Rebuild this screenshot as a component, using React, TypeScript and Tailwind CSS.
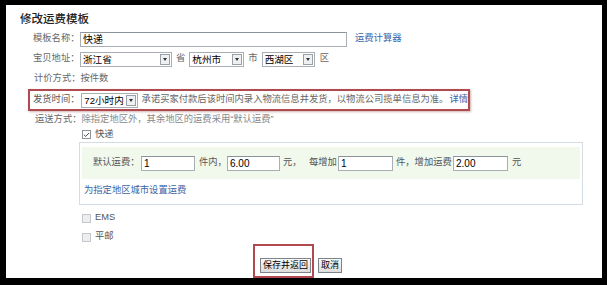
import { Check } from 'lucide-react'

// Small select box with a grey arrow button on the right
function Select({ value, width }: { value: string; width: string }) {
  return (
    <div className={`${width} h-[15px] flex items-stretch border border-[#a9aeb5] bg-white`}>
      <span className="flex-1 pl-[2px] leading-[13px] text-[9.6px] text-black whitespace-nowrap overflow-hidden">{value}</span>
      <span className="w-[10px] shrink-0 my-[1px] mr-[1px] flex items-center justify-center border border-[#9aa0a8] bg-[#eef0f2]">
        <span className="w-0 h-0 border-l-[2.5px] border-r-[2.5px] border-t-[3px] border-l-transparent border-r-transparent border-t-[#333]" />
      </span>
    </div>
  )
}

function Input({ value, width }: { value: string; width: string }) {
  return (
    <div className={`${width} shrink-0 h-[15px] border border-[#a9aeb5] border-t-[#8d939b] bg-white pl-[2px] leading-[13px] text-[10px] text-black`}>
      {value}
    </div>
  )
}

function Box({ checked }: { checked?: boolean }) {
  return (
    <span className={`w-[9px] h-[9px] flex items-center justify-center border ${checked ? 'border-[#8e949b] bg-white' : 'border-[#c4c7cb] bg-[#eceef0]'}`}>
      {checked && <Check size={8} strokeWidth={3} className="text-[#333]" />}
    </span>
  )
}

export default function App() {
  return (
    <div className="w-[612px] h-[285px] bg-white font-['Liberation_Sans','Noto_Sans_CJK_SC',sans-serif]">
      <div className="w-[607px] h-[285px] border-t-[5px] border-l-[6px] border-r-[5px] border-b-[7px] border-black pl-[14px] pt-[5px] text-[9.3px] text-[#666] whitespace-nowrap">
        {/* Title */}
        <div className="h-[19px] leading-[16px] pt-[1px] text-[11.5px] font-medium text-[#222]">修改运费模板</div>

        {/* 模板名称 */}
        <div className="h-[20px] pl-[13px] flex items-center">
          <span className="w-[47px]">模板名称：</span>
          <Input value="快递" width="w-[267px]" />
          <span className="ml-[8px] text-[#3b64a6]">运费计算器</span>
        </div>

        {/* 宝贝地址 */}
        <div className="h-[20px] pl-[13px] flex items-center">
          <span className="w-[47px]">宝贝地址：</span>
          <Select value="浙江省" width="w-[92px]" />
          <span className="mx-[4px]">省</span>
          <Select value="杭州市" width="w-[55px]" />
          <span className="mx-[4px]">市</span>
          <Select value="西湖区" width="w-[53px]" />
          <span className="ml-[5px]">区</span>
        </div>

        {/* 计价方式 */}
        <div className="h-[20px] pl-[14px] flex items-center">
          <span>计价方式：</span>
          <span>按件数</span>
        </div>

        {/* 发货时间 */}
        <div className="ml-[8px] w-[442px] h-[22px] border-2 border-[#b04a50] shadow-[1px_1px_2px_rgba(120,30,30,0.35)] pl-[3px] flex items-center">
          <span className="w-[49px] text-[#555]">发货时间：</span>
          <Select value="72小时内" width="w-[57px]" />
          <span className="ml-[4px]">承诺买家付款后该时间内录入物流信息并发货，以物流公司揽单信息为准。</span>
          <span className="ml-[1px] text-[#3b64a6]">详情</span>
        </div>

        {/* 运送方式 */}
        <div className="h-[15px] mt-[1px] pl-[15px] flex items-center">
          <span>运送方式：</span>
          <span className="text-[#888]">除指定地区外，其余地区的运费采用“默认运费”</span>
        </div>

        <div className="h-[15px] pl-[62px] flex items-center gap-[4px]">
          <Box checked />
          <span className="text-[#555]">快递</span>
        </div>

        {/* Default fee panel */}
        <div className="ml-[59px] w-[504px] h-[63px] border border-[#d5dde3] pt-[4px] px-[2px]">
          <div className="h-[32px] bg-[#f1f8ec] pl-[11px] flex items-center text-[#555]">
            <span className="w-[48px]">默认运费：</span>
            <Input value="1" width="w-[54px]" />
            <span className="ml-[4px] w-[28px]">件内，</span>
            <Input value="6.00" width="w-[53px]" />
            <span className="ml-[3px] w-[26px]">元，</span>
            <span className="w-[29px]">每增加</span>
            <Input value="1" width="w-[55px]" />
            <span className="ml-[3px] w-[57px]">件，增加运费</span>
            <Input value="2.00" width="w-[55px]" />
            <span className="ml-[4px]">元</span>
          </div>
          <div className="h-[24px] pl-[2px] flex items-center text-[#3b64a6]">为指定地区城市设置运费</div>
        </div>

        <div className="h-[12px] mt-[7px] pl-[62px] flex items-center gap-[4px]">
          <Box />
          <span className="text-[#555]">EMS</span>
        </div>
        <div className="h-[12px] mt-[7px] pl-[62px] flex items-center gap-[4px]">
          <Box />
          <span className="text-[#555]">平邮</span>
        </div>

        {/* Buttons */}
        <div className="mt-[1px] ml-[233px] flex items-end">
          <div className="w-[61px] h-[34px] border-2 border-[#b04a50] flex items-end justify-end pb-[3px] pr-[1px]">
            <button className="h-[15px] px-[2px] border border-[#7d838b] bg-[linear-gradient(#fafafa,#dcdcdc)] text-[9px] leading-[13px] text-black">保存并返回</button>
          </div>
          <button className="ml-[4px] mb-[5px] h-[15px] px-[2px] border border-[#7d838b] bg-[linear-gradient(#fafafa,#dcdcdc)] text-[9px] leading-[13px] text-black">取消</button>
        </div>
      </div>
    </div>
  )
}
